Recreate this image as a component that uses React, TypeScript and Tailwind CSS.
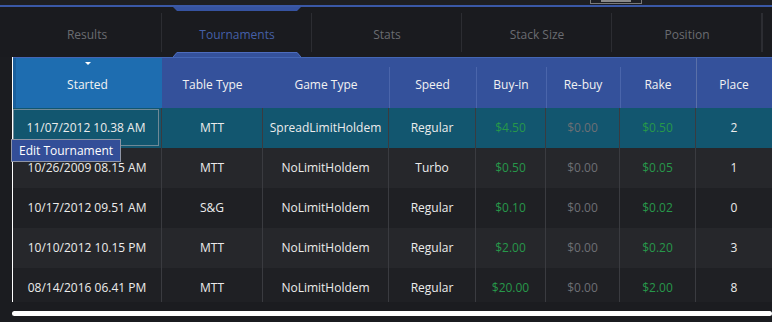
import React from "react";

const gridCols = "grid grid-cols-[149px_101px_126px_87px_70px_74px_76px_76px]";

const tabs = ["Results", "Tournaments", "Stats", "Stack Size", "Position"];

const headers = ["Started", "Table Type", "Game Type", "Speed", "Buy-in", "Re-buy", "Rake", "Place"];

const rows = [
  ["11/07/2012 10.38 AM", "MTT", "SpreadLimitHoldem", "Regular", "$4.50", "$0.00", "$0.50", "2"],
  ["10/26/2009 08.15 AM", "MTT", "NoLimitHoldem", "Turbo", "$0.50", "$0.00", "$0.05", "1"],
  ["10/17/2012 09.51 AM", "S&G", "NoLimitHoldem", "Regular", "$0.10", "$0.00", "$0.02", "0"],
  ["10/10/2012 10.15 PM", "MTT", "NoLimitHoldem", "Regular", "$2.00", "$0.00", "$0.20", "3"],
  ["08/14/2016 06.41 PM", "MTT", "NoLimitHoldem", "Regular", "$20.00", "$0.00", "$2.00", "8"],
];

// colour per column for body text
function cellColor(i: number) {
  if (i === 4 || i === 6) return "text-[#27984a]";
  if (i === 5) return "text-[#6d6f74]";
  return "text-[#ececec]";
}

function rowBg(r: number) {
  if (r === 0) return "bg-[#12566f]";
  return r % 2 === 1 ? "bg-[#26272b]" : "bg-[#1f2024]";
}

export default function App() {
  return (
    <div
      className="relative w-[772px] h-[322px] overflow-hidden bg-[#1b1c20] text-[12px]"
      style={{ fontFamily: '"Open Sans", "DejaVu Sans", sans-serif' }}
    >
      {/* top strip */}
      <div className="relative h-[5px] bg-[#1e1f23]">
        <div className="absolute left-[590px] top-[-1px] w-[52px] h-[5px] border border-[#7a7a7a]">
          <div className="mx-auto w-[30px] h-[2px] bg-[#8a8a8a]" />
        </div>
      </div>
      <div className="h-[2px] bg-[#3a58a6]" />

      {/* tabs */}
      <div className="flex h-[50px] pl-[12px] bg-[#1a1b1f]">
        {tabs.map((t) => {
          const active = t === "Tournaments";
          return (
            <div key={t} className="relative w-[150px] shrink-0 flex items-center justify-center pt-[5px]">
              <span className={active ? "text-[#4560a8]" : "text-[#6a6c71]"}>{t}</span>
              <div className="absolute right-0 top-[6px] bottom-[5px] w-px bg-[#2c2d32]" />
              {active && (
                <>
                  <svg className="absolute left-[11px] top-0" width="128" height="5" viewBox="0 0 128 5">
                    <polygon points="0,0 128,0 124,4 4,4" fill="#3653a0" />
                  </svg>
                  <svg className="absolute left-[11px] bottom-0" width="128" height="5" viewBox="0 0 128 5">
                    <polygon points="4,0 124,0 128,5 0,5" fill="#34519b" />
                    <polyline points="0,5 4,0.5 124,0.5 128,5" fill="none" stroke="#4d6cbd" strokeWidth="1" />
                  </svg>
                </>
              )}
            </div>
          );
        })}
        <div className="relative w-[12px] shrink-0">
          <div className="absolute left-0 top-[6px] bottom-[5px] w-px bg-[#2c2d32]" />
        </div>
      </div>

      {/* table */}
      <div className="ml-[12px] border-l border-white">
        <div className={`${gridCols} h-[51px] bg-[#34519b] border-t border-[#4466b4]`}>
          {headers.map((h, i) => (
            <div
              key={h}
              className={`relative flex items-center justify-center pt-[3px] text-[#f2f2f2] ${
                i === 0 ? "bg-[#1e6db0] shadow-[inset_3px_0_0_#1a5f9c]" : ""
              }`}
            >
              {i === 0 && (
                <div className="absolute top-[4px] left-1/2 -translate-x-1/2 w-0 h-0 border-l-[3px] border-r-[3px] border-t-[3px] border-l-transparent border-r-transparent border-t-white" />
              )}
              {h}
              {i >= 3 && (
                <div
                  className={`absolute left-0 bottom-0 w-px ${
                    i === 7 ? "top-0 bg-[#5a70a8]" : "top-[9px] bg-[#4a65ab]"
                  }`}
                />
              )}
            </div>
          ))}
        </div>

        <div className="h-[194px] overflow-hidden">
          {rows.map((r, ri) => (
            <div key={ri} className={`${gridCols} h-[40px] ${rowBg(ri)}`}>
              {r.map((c, ci) => (
                <div
                  key={ci}
                  className={`flex items-center justify-center ${cellColor(ci)} ${
                    ci < 7 ? "border-r border-[#3a3b40]" : ""
                  }`}
                >
                  {ri === 0 && ci === 0 ? (
                    <div className="flex items-center justify-center w-[146px] h-[37px] mt-[1px] mb-[2px] mr-[2px] border border-[#6f8996]">
                      {c}
                    </div>
                  ) : (
                    c
                  )}
                </div>
              ))}
            </div>
          ))}
        </div>
      </div>

      {/* scrollbar */}
      <div className="ml-[12px] mt-[9px] h-[5px] rounded-full bg-white" />

      {/* tooltip */}
      <div className="absolute left-[11px] top-[139px] w-[110px] h-[23px] flex items-center pl-[7px] bg-[#334e98] border border-[#8f95a6] text-white">
        Edit Tournament
      </div>
    </div>
  );
}
